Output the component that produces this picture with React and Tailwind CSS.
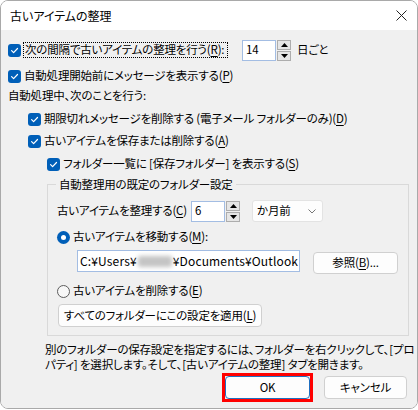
import React from "react";

const font = { fontFamily: '"Noto Sans CJK JP", "Noto Sans", sans-serif' };

const Check = () => (
  <span className="w-[13px] h-[13px] rounded-[3px] bg-[#005fb8] flex items-center justify-center shrink-0">
    <svg width="9" height="9" viewBox="0 0 9 9">
      <path d="M1.6 4.7 L3.6 6.7 L7.5 2.5" fill="none" stroke="white" strokeWidth="1.2" strokeLinecap="round" strokeLinejoin="round" />
    </svg>
  </span>
);

const RadioOn = () => (
  <span className="w-[13px] h-[13px] rounded-full bg-[#005fb8] flex items-center justify-center shrink-0">
    <span className="w-[5px] h-[5px] rounded-full bg-white" />
  </span>
);

const RadioOff = () => (
  <span className="w-[13px] h-[13px] rounded-full border border-[#5c5c5c] bg-[#f7f7f7] shrink-0" />
);

const U = ({ children }) => <span className="underline underline-offset-[2px]">{children}</span>;

const Spin = () => (
  <div className="flex flex-col gap-[1px] ml-[1px]">
    <div className="w-[14px] h-[10px] border border-[#adadad] bg-[#e6e6e6] flex items-center justify-center">
      <svg width="7" height="4" viewBox="0 0 7 4"><path d="M0 4 L3.5 0 L7 4Z" fill="#000" /></svg>
    </div>
    <div className="w-[14px] h-[10px] border border-[#adadad] bg-[#e6e6e6] flex items-center justify-center">
      <svg width="7" height="4" viewBox="0 0 7 4"><path d="M0 0 L3.5 4 L7 0Z" fill="#000" /></svg>
    </div>
  </div>
);

export default function App() {
  return (
    <div className="w-[418px] h-[410px] bg-white [font-feature-settings:'palt'] text-[11.5px] tracking-[-0.2px] text-black" style={font}>
      <div className="w-[418px] h-[409px] border border-[#a9a9a9] rounded-[8px] overflow-hidden flex flex-col">
        <div className="h-[29px] bg-white flex items-center justify-between pl-[9px] pr-[10px] shrink-0">
          <span className="text-[12px] tracking-normal">古いアイテムの整理</span>
          <svg width="11" height="11" viewBox="0 0 11 11">
            <path d="M0.5 0.5 L10.5 10.5 M10.5 0.5 L0.5 10.5" stroke="#222" strokeWidth="1" />
          </svg>
        </div>
        <div className="flex-1 bg-[#f0f0f0] pl-[7px] pt-[9px] flex flex-col">
          {/* row 1 */}
          <div className="h-[22px] flex items-center">
            <Check />
            <div className="ml-[2px] w-[205px] h-[16px] border border-dotted border-black px-[1px] flex items-center whitespace-nowrap">
              次の間隔で古いアイテムの整理を行う(<U>R</U>):
            </div>
            <div className="ml-[14px] w-[34px] h-[21px] bg-white border border-[#a3bde3] flex items-center pl-[3px]">14</div>
            <Spin />
            <span className="ml-[6px]">日ごと</span>
          </div>
          {/* row 2 */}
          <div className="mt-[4px] h-[22px] flex items-center">
            <Check />
            <span className="ml-[3px] whitespace-nowrap">自動処理開始前にメッセージを表示する(<U>P</U>)</span>
          </div>
          {/* row 3 */}
          <div className="h-[18px] flex items-center whitespace-nowrap">自動処理中、次のことを行う:</div>
          {/* row 4 */}
          <div className="mt-[3px] h-[22px] flex items-center pl-[20px]">
            <Check />
            <span className="ml-[3px] whitespace-nowrap">期限切れメッセージを削除する (電子メール フォルダーのみ)(<U>D</U>)</span>
          </div>
          {/* row 5 */}
          <div className="h-[22px] flex items-center pl-[20px]">
            <Check />
            <span className="ml-[3px] whitespace-nowrap">古いアイテムを保存または削除する(<U>A</U>)</span>
          </div>
          {/* row 6 */}
          <div className="mt-[1px] h-[22px] flex items-center pl-[39px]">
            <Check />
            <span className="ml-[3px] whitespace-nowrap">フォルダー一覧に [保存フォルダー] を表示する(<U>S</U>)</span>
          </div>
          {/* group */}
          <fieldset className="mt-[2px] ml-[39px] w-[362px] border border-[#d9d9d9] pl-[9px] pb-[8px]">
            <legend className="ml-[-1px] px-[3px] leading-[14px] whitespace-nowrap">自動整理用の既定のフォルダー設定</legend>
            <div className="mt-[9px] h-[22px] flex items-center">
              <span className="w-[134px] whitespace-nowrap">古いアイテムを整理する(<U>C</U>)</span>
              <div className="w-[34px] h-[21px] bg-white border border-[#a3bde3] flex items-center pl-[3px]">6</div>
              <Spin />
              <div className="ml-[12px] w-[71px] h-[22px] bg-[#fdfdfd] border border-[#e3e3e3] rounded-[3px] flex items-center justify-between pl-[4px] pr-[6px]">
                <span>か月前</span>
                <svg width="8" height="5" viewBox="0 0 8 5"><path d="M0.5 0.5 L4 4 L7.5 0.5" fill="none" stroke="#777" strokeWidth="1" /></svg>
              </div>
            </div>
            <div className="mt-[4px] h-[22px] flex items-center">
              <RadioOn />
              <span className="ml-[3px] whitespace-nowrap">古いアイテムを移動する(<U>M</U>):</span>
            </div>
            <div className="mt-[2px] flex items-start ml-[20px]">
              <div className="w-[223px] h-[22px] bg-white border border-[#a3bde3] flex items-center pl-[2px] overflow-hidden whitespace-nowrap text-[12px] tracking-[0.15px]">
                C:¥Users¥
                <span className="inline-block w-[34px] h-[11px] bg-[#c4c4c4] blur-[2px] rounded-[2px] mx-[1px]" />
                ¥Documents¥Outlook
              </div>
              <div className="mt-[2px] ml-[13px] w-[85px] h-[22px] bg-[#fdfdfd] border border-[#d0d0d0] rounded-[4px] flex items-center justify-center whitespace-nowrap">
                参照(<U>B</U>)...
              </div>
            </div>
            <div className="mt-[6px] h-[22px] flex items-center">
              <RadioOff />
              <span className="ml-[3px] whitespace-nowrap">古いアイテムを削除する(<U>E</U>)</span>
            </div>
            <div className="mt-[2px] ml-[1px] w-[204px] h-[23px] bg-[#fdfdfd] border border-[#d0d0d0] rounded-[4px] flex items-center justify-center whitespace-nowrap">
              すべてのフォルダーにこの設定を適用(<U>L</U>)
            </div>
          </fieldset>
          <div className="mt-[6px] ml-[37px] leading-[15px] whitespace-nowrap">
            <div>別のフォルダーの保存設定を指定するには、フォルダーを右クリックして、[プロ</div>
            <div>パティ] を選択します。そして、[古いアイテムの整理] タブを開きます。</div>
          </div>
          <div className="mt-[1px] flex items-center">
            <div className="ml-[214px] border-[3px] border-[#ff0000]">
              <div className="w-[85px] h-[23px] bg-[#fdfdfd] border border-[#1f6fc0] rounded-[4px] flex items-center justify-center">OK</div>
            </div>
            <div className="ml-[11px] w-[83px] h-[23px] bg-[#fdfdfd] border border-[#d0d0d0] rounded-[4px] flex items-center justify-center">キャンセル</div>
          </div>
        </div>
      </div>
    </div>
  );
}
